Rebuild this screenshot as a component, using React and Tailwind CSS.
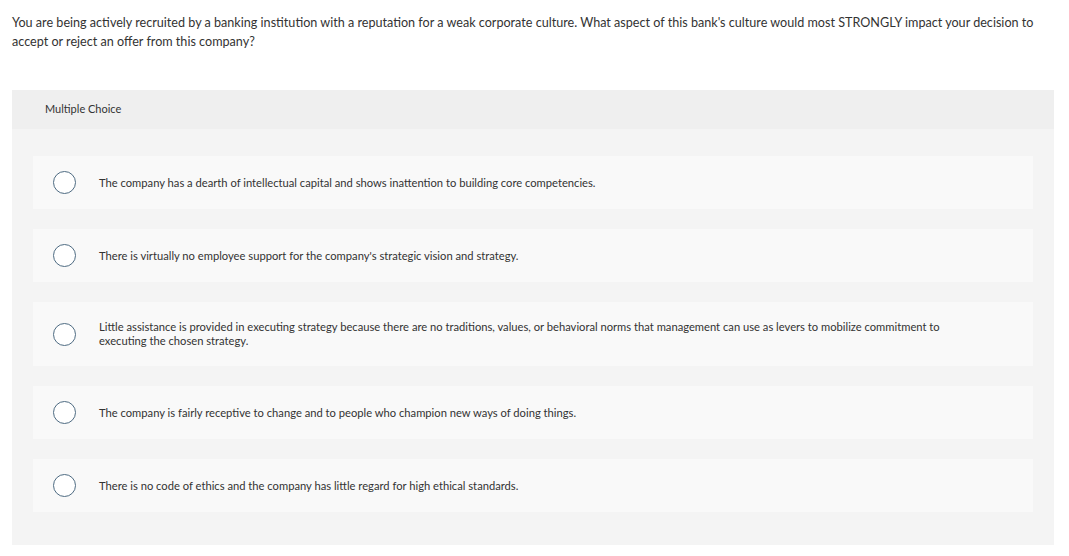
const options = [
  "The company has a dearth of intellectual capital and shows inattention to building core competencies.",
  "There is virtually no employee support for the company's strategic vision and strategy.",
  "Little assistance is provided in executing strategy because there are no traditions, values, or behavioral norms that management can use as levers to mobilize commitment to executing the chosen strategy.",
  "The company is fairly receptive to change and to people who champion new ways of doing things.",
  "There is no code of ethics and the company has little regard for high ethical standards.",
];

export default function App() {
  return (
    <div className="w-[1069px] h-[556px] bg-white text-[#333] font-['Lato',sans-serif] overflow-hidden">
      <p className="px-3 pt-[13px] text-[12.6px] leading-[19px] whitespace-nowrap">
        You are being actively recruited by a banking institution with a reputation for a weak corporate culture. What
        aspect of this bank's culture would most STRONGLY impact your decision to
        <br />
        accept or reject an offer from this company?
      </p>

      <div className="mx-3 mt-[39px] w-[1042px] bg-[#f4f4f4]">
        <div className="h-[39px] bg-[#efefef] flex items-center pl-[33px] text-[11px]">Multiple Choice</div>
        <div className="px-[21px] pt-[27px] pb-[33px] flex flex-col gap-5">
          {options.map((o, i) => (
            <div key={i} className="bg-[#f9f9f9] min-h-[53px] flex items-center py-[9px]">
              <div className="w-[62px] flex justify-center shrink-0">
                <div className="w-[23px] h-[23px] rounded-full border border-[#4e6b82] bg-white"></div>
              </div>
              <p className="text-[11.2px] leading-[14px] w-[875px] py-[9px] pl-[4px]">{o}</p>
            </div>
          ))}
        </div>
      </div>
    </div>
  );
}
